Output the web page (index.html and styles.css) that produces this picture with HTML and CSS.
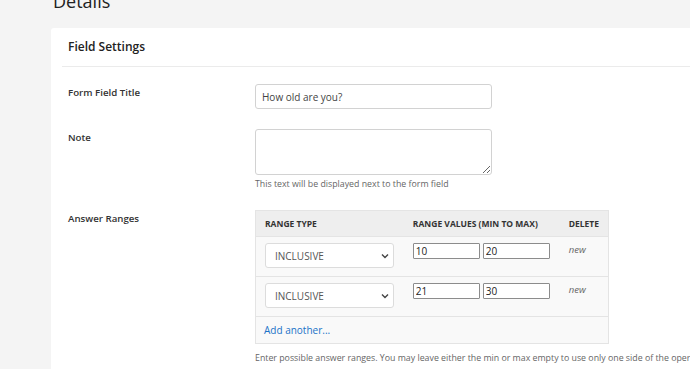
FILE: index.html
```html
<!DOCTYPE html>
<html lang="en">
    <head>
        <meta charset="UTF-8">
        <title>Details</title>
        <link rel="stylesheet" href="styles.css">
    </head>
    <body>
        <div class="page">
            <h1 class="page-title">Details</h1>

            <div class="card">
                <h2 class="card-title">Field Settings</h2>

                <div class="rows">
                    <div class="row">
                        <label class="row-label">Form Field Title</label>
                        <div class="row-field">
                            <input class="text-input" type="text" value="How old are you?">
                        </div>
                    </div>

                    <div class="row">
                        <label class="row-label">Note</label>
                        <div class="row-field">
                            <textarea class="text-area"></textarea>
                            <p class="help">This text will be displayed next to the form field</p>
                        </div>
                    </div>

                    <div class="row">
                        <label class="row-label">Answer Ranges</label>
                        <div class="row-field">
                            <table class="ranges">
                                <thead>
                                    <tr>
                                        <th class="col-type">Range Type</th>
                                        <th class="col-values">Range Values (Min to Max)</th>
                                        <th class="col-delete">Delete</th>
                                    </tr>
                                </thead>
                                <tbody>
                                    <tr>
                                        <td>
                                            <span class="select-wrap">
                                                <select class="select">
                                                    <option>INCLUSIVE</option>
                                                    <option>EXCLUSIVE</option>
                                                </select>
                                                <svg class="chevron" width="8" height="6" viewBox="0 0 8 6"><path d="M1 1.5 L4 4.5 L7 1.5" fill="none" stroke="#444" stroke-width="1.4"/></svg>
                                            </span>
                                        </td>
                                        <td>
                                            <div class="pair">
                                                <input class="num" type="text" value="10">
                                                <input class="num" type="text" value="20">
                                            </div>
                                        </td>
                                        <td><em class="new">new</em></td>
                                    </tr>
                                    <tr>
                                        <td>
                                            <span class="select-wrap">
                                                <select class="select">
                                                    <option>INCLUSIVE</option>
                                                    <option>EXCLUSIVE</option>
                                                </select>
                                                <svg class="chevron" width="8" height="6" viewBox="0 0 8 6"><path d="M1 1.5 L4 4.5 L7 1.5" fill="none" stroke="#444" stroke-width="1.4"/></svg>
                                            </span>
                                        </td>
                                        <td>
                                            <div class="pair">
                                                <input class="num" type="text" value="21">
                                                <input class="num" type="text" value="30">
                                            </div>
                                        </td>
                                        <td><em class="new">new</em></td>
                                    </tr>
                                    <tr class="add-row">
                                        <td colspan="3"><a class="add-link" href="#">Add another...</a></td>
                                    </tr>
                                </tbody>
                            </table>
                            <p class="help help-wide">Enter possible answer ranges. You may leave either the min or max empty to use only one side of the operation.</p>
                        </div>
                    </div>
                </div>
            </div>
        </div>
    </body>
</html>
```

FILE: styles.css
```css
html, body {
    margin: 0;
    padding: 0;
    background: #f4f4f4;
    overflow: hidden;
}

body {
    font-family: "Open Sans", "Liberation Sans", sans-serif;
    color: #333;
}

.page {
    padding-left: 51px;
}

.page-title {
    margin: -11px 0 15px 2px;
    font-size: 18px;
    line-height: 24px;
    font-weight: 400;
    color: #222;
}

.card {
    width: 700px;
    min-height: 400px;
    background: #fff;
    border-radius: 3px;
}

.card-title {
    margin: 0 0 0 11px;
    padding: 8px 6px 8px;
    font-size: 12px;
    line-height: 22px;
    font-weight: 600;
    color: #222;
    border-bottom: 1px solid #ebebeb;
}

.rows {
    padding: 17px 0 0 17px;
}

.row {
    display: grid;
    grid-template-columns: 187px 1fr;
    margin-bottom: 20px;
}

.row-label {
    padding-top: 2px;
    font-size: 9.7px;
    line-height: 14px;
    font-weight: 600;
    color: #333;
}

/* inputs */
.text-input {
    box-sizing: border-box;
    display: block;
    width: 237px;
    height: 25px;
    margin: 0;
    padding: 0 6px;
    font-family: inherit;
    font-size: 10px;
    color: #444;
    border: 1px solid #d2d2d2;
    border-radius: 3px;
    outline: none;
}

.text-area {
    box-sizing: border-box;
    display: block;
    width: 237px;
    height: 46px;
    margin: 0;
    padding: 4px 6px;
    font-family: inherit;
    font-size: 10px;
    border: 1px solid #d2d2d2;
    border-radius: 3px;
    outline: none;
}

.help {
    margin: 3px 0 0;
    font-size: 8.8px;
    line-height: 12px;
    color: #666;
}

.help-wide {
    margin-top: 7px;
    line-height: 14px;
    white-space: nowrap;
}

/* ranges table */
.ranges {
    width: 354px;
    border-collapse: collapse;
    border: 1px solid #e4e4e4;
    background: #f9f9f9;
    font-size: 10px;
    line-height: 12px;
}

.ranges th {
    height: 25px;
    padding: 0 9px;
    text-align: left;
    font-size: 8.5px;
    font-weight: 700;
    text-transform: uppercase;
    color: #333;
    background: #eeeeee;
    border-bottom: 1px solid #e4e4e4;
}

.col-type {
    width: 130px;
}

.col-values {
    width: 138px;
}

.ranges td {
    padding: 6px 9px 8px;
    vertical-align: top;
    border-bottom: 1px solid #e4e4e4;
}

.select-wrap {
    position: relative;
    display: inline-block;
    vertical-align: top;
}

.select {
    box-sizing: border-box;
    display: block;
    width: 129px;
    height: 25px;
    margin: 0;
    padding: 0 0 0 9px;
    font-family: inherit;
    font-size: 10px;
    color: #555;
    background: #fff;
    border: 1px solid #dcdcdc;
    border-radius: 3px;
    appearance: none;
    -webkit-appearance: none;
    outline: none;
}

.chevron {
    position: absolute;
    right: 5px;
    top: 10px;
}

.pair {
    display: flex;
    gap: 3px;
}

.num {
    box-sizing: border-box;
    width: 67px;
    height: 16px;
    margin: 0;
    padding: 0 2px;
    font-family: inherit;
    font-size: 10px;
    color: #222;
    background: #fff;
    border: 1px solid #8c8c8c;
    border-radius: 1px;
    outline: none;
}

.new {
    display: block;
    padding-top: 1px;
    font-size: 9.5px;
    line-height: 12px;
    color: #666;
}

.add-row td {
    padding: 6px 8px 6px;
}

.add-link {
    font-size: 10px;
    line-height: 14px;
    color: #1a73c8;
    text-decoration: none;
}
```
